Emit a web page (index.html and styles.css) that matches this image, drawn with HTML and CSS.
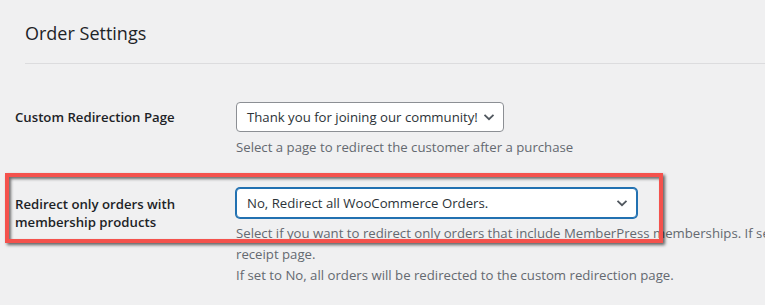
FILE: index.html
```html
<!DOCTYPE html>
<html lang="en">
<head>
<meta charset="utf-8">
<title>Order Settings</title>
<link rel="stylesheet" href="styles.css">
</head>
<body>
<div class="page">
  <h2 class="title">Order Settings</h2>
  <div class="rule"></div>
  <div class="form">
    <div class="row">
      <div class="label">Custom Redirection Page</div>
      <div class="field">
        <div class="select sel-page">
          <span class="select-text">Thank you for joining our community!</span>
          <svg class="chev" width="12" height="8" viewBox="0 0 12 8"><path d="M1.5 1.8 6 6.2 10.5 1.8" fill="none" stroke="#50575e" stroke-width="1.8"/></svg>
        </div>
        <p class="desc">Select a page to redirect the customer after a purchase</p>
      </div>
    </div>
    <div class="row">
      <div class="label">Redirect only orders with membership products</div>
      <div class="field">
        <div class="select sel-orders focus">
          <span class="select-text">No, Redirect all WooCommerce Orders.</span>
          <svg class="chev" width="12" height="8" viewBox="0 0 12 8"><path d="M1.5 1.8 6 6.2 10.5 1.8" fill="none" stroke="#50575e" stroke-width="1.8"/></svg>
        </div>
        <p class="desc">Select if you want to redirect only orders that include MemberPress memberships. If set to Yes, other orders will go to the default WooCommerce<br>receipt page.<br>If set to No, all orders will be redirected to the custom redirection page.</p>
      </div>
    </div>
  </div>
  <div class="annotation"></div>
</div>
</body>
</html>
```

FILE: styles.css
```css
html, body {
  margin: 0;
  padding: 0;
  overflow: hidden;
  background: #f0f0f1;
}
body {
  width: 765px;
  height: 305px;
  font-family: "Open Sans", "Noto Sans", sans-serif;
  font-size: 13.2px;
  color: #1d2327;
}
.page {
  position: relative;
  width: 1100px;
  padding-top: 20px;
}
.title {
  margin: 0 0 0 25px;
  font-size: 18px;
  font-weight: 500;
  line-height: 26px;
  color: #1d2327;
}
.rule {
  margin: 17px 0 0 25px;
  height: 1px;
  background: #dcdcde;
}
.form {
  margin: 23px 0 0 15px;
}
.row {
  display: grid;
  grid-template-columns: 211px 1fr;
}
.label {
  padding: 21px 10px 20px 0;
  font-weight: 600;
  line-height: 18px;
}
.row + .row .label {
  padding-top: 22px;
}
.field {
  padding: 15px 10px;
}
.select {
  box-sizing: border-box;
  height: 30px;
  display: flex;
  align-items: center;
  justify-content: space-between;
  padding: 0 8px 0 10px;
  background: #fff;
  border: 1px solid #8c8f94;
  border-radius: 4px;
  color: #2c3338;
}
.sel-page { width: 268px; }
.sel-orders { width: 401px; }
.focus {
  border-color: #2271b1;
  box-shadow: 0 0 0 1px #2271b1;
}
.select-text {
  white-space: nowrap;
  line-height: 20px;
}
.chev { flex: none; }
.desc {
  margin: 5px 0 0;
  line-height: 21px;
  color: #646970;
  white-space: nowrap;
}
.annotation {
  position: absolute;
  left: 5px;
  top: 173px;
  width: 658px;
  height: 70px;
  box-sizing: border-box;
  border: 4px solid #f4524d;
  box-shadow: 2px 2px 3px rgba(0, 0, 0, 0.6), inset 2px 2px 3px rgba(0, 0, 0, 0.55);
}
```
